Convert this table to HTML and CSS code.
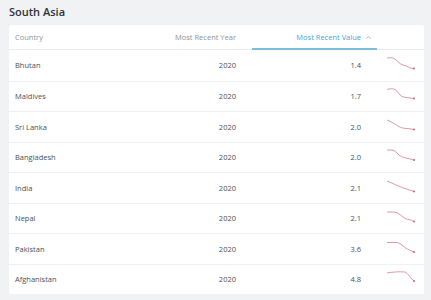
FILE: index.html
```html
<!DOCTYPE html>
<html>
<head>
<meta charset="utf-8">
<link rel="stylesheet" href="styles.css">
</head>
<body>
<h2 class="title">South Asia</h2>
<div class="card">
  <div class="row head">
    <div class="c-country">Country</div>
    <div class="c-year">Most Recent Year</div>
    <div class="c-value active">Most Recent Value <span class="arrow"><svg viewBox="0 0 5 3" width="5" height="3"><path d="M0.5 2.6 L2.5 0.6 L4.5 2.6"/></svg></span></div>
    <div class="c-spark"></div>
  </div>
  <div class="row">
    <div class="c-country">Bhutan</div><div class="c-year">2020</div><div class="c-value">1.4</div>
    <div class="c-spark"><svg viewBox="0 0 28 12" width="28" height="12"><path d="M0 1 C3 0.5 5 0.6 7 1.5 C10 3 12 7 16 8 C19 9 21 9.5 23 11 L27 11.5"/><circle cx="27" cy="11.5" r="0.9"/></svg></div>
  </div>
  <div class="row">
    <div class="c-country">Maldives</div><div class="c-year">2020</div><div class="c-value">1.7</div>
    <div class="c-spark"><svg viewBox="0 0 28 12" width="28" height="12"><path d="M0 1.5 C3 0.5 6 0.5 8 1.5 C11 3 12 7 15 8.5 C18 9.5 20 9.5 23 10 L27 10.5"/><circle cx="27" cy="10.5" r="0.9"/></svg></div>
  </div>
  <div class="row">
    <div class="c-country">Sri Lanka</div><div class="c-year">2020</div><div class="c-value">2.0</div>
    <div class="c-spark"><svg viewBox="0 0 28 12" width="28" height="12"><path d="M0 1 C4 2.5 8 5 11 7 C14 9 17 9.5 21 9.5 L27 10.5"/><circle cx="27" cy="10.5" r="0.9"/></svg></div>
  </div>
  <div class="row">
    <div class="c-country">Bangladesh</div><div class="c-year">2020</div><div class="c-value">2.0</div>
    <div class="c-spark"><svg viewBox="0 0 28 12" width="28" height="12"><path d="M0 1 L5 1 C8 1.5 10 4 12 6 C15 8.5 19 9 23 10 L27 11"/><circle cx="27" cy="11" r="0.9"/></svg></div>
  </div>
  <div class="row">
    <div class="c-country">India</div><div class="c-year">2020</div><div class="c-value">2.1</div>
    <div class="c-spark"><svg viewBox="0 0 28 12" width="28" height="12"><path d="M0 1 C5 3 10 5.5 15 7.5 C19 9 23 10 27 11.5"/><circle cx="27" cy="11.5" r="0.9"/></svg></div>
  </div>
  <div class="row">
    <div class="c-country">Nepal</div><div class="c-year">2020</div><div class="c-value">2.1</div>
    <div class="c-spark"><svg viewBox="0 0 28 12" width="28" height="12"><path d="M0 2 L7 2 C11 2.5 13 4.5 16 7 C19 9.5 22 9.5 24 10 L27 11.5"/><circle cx="27" cy="11.5" r="0.9"/></svg></div>
  </div>
  <div class="row">
    <div class="c-country">Pakistan</div><div class="c-year">2020</div><div class="c-value">3.6</div>
    <div class="c-spark"><svg viewBox="0 0 28 12" width="28" height="12"><path d="M0 1.5 L10 1.5 C13 2 15 4 18 6.5 C21 9 24 9.5 27 11"/><circle cx="27" cy="11" r="0.9"/></svg></div>
  </div>
  <div class="row">
    <div class="c-country">Afghanistan</div><div class="c-year">2020</div><div class="c-value">4.8</div>
    <div class="c-spark"><svg viewBox="0 0 28 12" width="28" height="12"><path d="M0 2 C5 1 12 0.5 18 1 C21 2 24 8 27 10"/><circle cx="27" cy="10" r="0.9"/></svg></div>
  </div>
</div>
</body>
</html>
```

FILE: styles.css
```css
html, body {
  margin: 0;
  padding: 0;
  background: #f1f2f4;
  font-family: "Open Sans", "Noto Sans", sans-serif;
}
body {
  padding: 5px 7px 6px 9px;
  height: 300px;
  box-sizing: border-box;
}
.title {
  margin: 0;
  height: 20px;
  line-height: 14px;
  font-size: 11px;
  font-weight: 600;
  color: #2f3338;
}
.card {
  background: #ffffff;
  border-radius: 2px;
  width: 415px;
}
.row {
  display: grid;
  grid-template-columns: 1fr 120px 125px 47px;
  align-items: center;
  height: 30.5px;
  border-top: 1px solid #eef0f2;
  box-sizing: border-box;
  font-size: 7.5px;
  color: #4a4f55;
}
.row.head {
  height: 25px;
  border-top: none;
  border-bottom: 1px solid #e8eaed;
  color: #8b939b;
  align-items: stretch;
}
.row.head + .row {
  border-top: none;
}
.row.head > div {
  display: flex;
  align-items: center;
}
.c-country {
  padding-left: 6px;
}
.c-year {
  text-align: right;
  padding-right: 16px;
}
.row.head .c-year {
  justify-content: flex-end;
}
.c-value {
  text-align: right;
  padding-right: 16px;
}
.row.head .c-value {
  justify-content: flex-end;
  padding-right: 2px;
}
.c-value.active {
  color: #4aa3d6;
  border-bottom: 2px solid #7dbedf;
  margin-bottom: -1px;
}
.arrow {
  display: flex;
  justify-content: center;
  align-items: center;
  width: 14px;
  margin-top: 1px;
}
.arrow svg {
  display: block;
}
.arrow path {
  fill: none;
  stroke: #8fa3b3;
  stroke-width: 0.8;
}
.c-spark {
  padding-left: 10px;
  display: flex;
  align-items: center;
  margin-top: -4px;
}
.c-spark svg {
  display: block;
  overflow: visible;
}
.c-spark path {
  fill: none;
  stroke: #d4808f;
  stroke-width: 0.8;
}
.c-spark circle {
  fill: #c9566a;
}
```
